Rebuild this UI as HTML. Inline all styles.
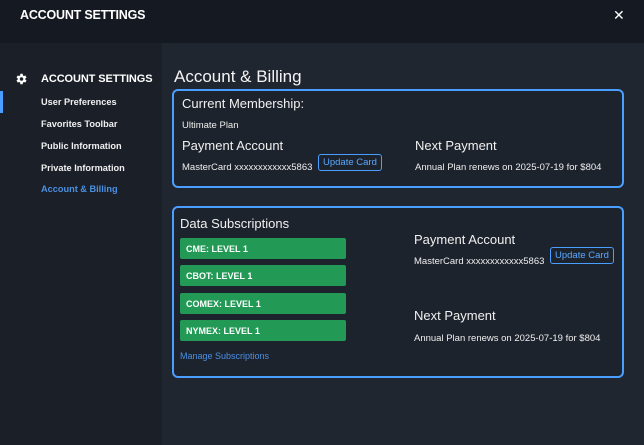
<!DOCTYPE html>
<html><head><style>
*{margin:0;padding:0;box-sizing:border-box}
body{width:644px;height:445px;background:#20262f;font-family:"Liberation Sans",sans-serif;color:#e8eaed;position:relative;overflow:hidden}
.hdr{position:absolute;left:0;top:0;width:644px;height:43px;background:#151a22}
.hdr .t{position:absolute;left:20px;top:8px;font-size:12.5px;font-weight:bold;color:#fff;letter-spacing:-0.2px}
.hdr .x{position:absolute;left:613px;top:7px;font-size:14px;color:#fff}
.side{position:absolute;left:0;top:43px;width:162px;height:402px;background:#1a1f28}
.ind{position:absolute;left:0;top:91px;width:3px;height:22px;background:#4a9eff}
.a{position:absolute;font-size:11px;font-weight:bold;color:#fff;letter-spacing:-0.1px}
.s{position:absolute;left:41px;font-size:9.2px;font-weight:bold;color:#f0f0f0}
.box{position:absolute;left:172px;width:452px;border:2px solid #4a9eff;border-radius:6px;background:#1d232d}
.p{position:absolute;white-space:nowrap}
.h{font-size:13px;color:#f0f0f0}
.sm{font-size:9.5px;color:#eee}
.btn{position:absolute;border:1.5px solid #4a9eff;border-radius:3px;color:#5aa8ff;font-size:9.5px;padding:2px 4px;white-space:nowrap}
.g{position:absolute;left:6px;width:166px;height:21px;background:#229a55;border-radius:2px;font-size:9px;font-weight:bold;color:#fff;padding:6px 0 0 6px}
</style></head><body>
<div class="hdr"><div class="t">ACCOUNT SETTINGS</div><div class="x">✕</div></div>
<div class="side"></div>
<div class="ind"></div>
<svg style="position:absolute;left:14px;top:72px" width="14" height="14" viewBox="0 0 24 24"><path fill="#fff" d="M19.4 13a7.5 7.5 0 000-2l2.1-1.6-2-3.5-2.5 1a7 7 0 00-1.7-1L14.9 3h-4l-.4 2.9a7 7 0 00-1.7 1l-2.5-1-2 3.5L6.4 11a7.5 7.5 0 000 2l-2.1 1.6 2 3.5 2.5-1a7 7 0 001.7 1l.4 2.9h4l.4-2.9a7 7 0 001.7-1l2.5 1 2-3.5zM12.9 15a3 3 0 110-6 3 3 0 010 6z"/></svg>
<div class="a" style="left:41px;top:73px">ACCOUNT SETTINGS</div>
<div class="s" style="top:97px">User Preferences</div>
<div class="s" style="top:119px">Favorites Toolbar</div>
<div class="s" style="top:141px">Public Information</div>
<div class="s" style="top:163px">Private Information</div>
<div class="s" style="top:184px;color:#4a90e2">Account &amp; Billing</div>
<div class="p" style="left:174px;top:67px;font-size:17px;color:#f4f4f4">Account &amp; Billing</div>
<div class="box" style="top:89px;height:99px">
<div class="p h" style="left:8px;top:5px">Current Membership:</div>
<div class="p sm" style="left:8px;top:29px">Ultimate Plan</div>
<div class="p h" style="left:8px;top:47px">Payment Account</div>
<div class="p sm" style="left:8px;top:71px">MasterCard xxxxxxxxxxxx5863</div>
<div class="btn" style="left:144px;top:63px">Update Card</div>
<div class="p h" style="left:241px;top:47px">Next Payment</div>
<div class="p sm" style="left:241px;top:71px">Annual Plan renews on 2025-07-19 for $804</div>
</div>
<div class="box" style="top:206px;height:172px">
<div class="p h" style="left:6px;top:8px">Data Subscriptions</div>
<div class="g" style="top:30px">CME: LEVEL 1</div>
<div class="g" style="top:57px">CBOT: LEVEL 1</div>
<div class="g" style="top:85px">COMEX: LEVEL 1</div>
<div class="g" style="top:112px">NYMEX: LEVEL 1</div>
<div class="p" style="left:6px;top:143px;font-size:9px;color:#4a90e2">Manage Subscriptions</div>
<div class="p h" style="left:240px;top:24px">Payment Account</div>
<div class="p sm" style="left:240px;top:48px">MasterCard xxxxxxxxxxxx5863</div>
<div class="btn" style="left:376px;top:39px">Update Card</div>
<div class="p h" style="left:240px;top:100px">Next Payment</div>
<div class="p sm" style="left:240px;top:125px">Annual Plan renews on 2025-07-19 for $804</div>
</div>
</body></html>
